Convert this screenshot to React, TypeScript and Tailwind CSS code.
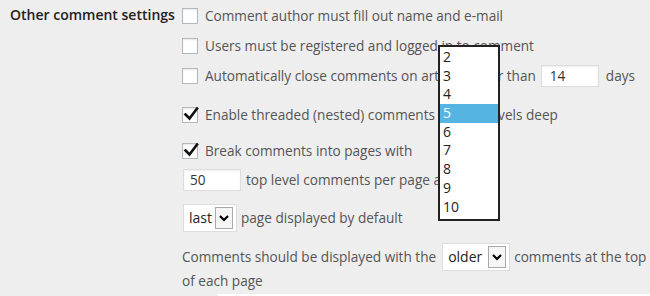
import React from "react";

const Checkbox = ({ checked = false }: { checked?: boolean }) => (
  <span className="relative inline-block w-[16px] h-[16px] shrink-0 bg-white border border-[#b4b9be] shadow-[inset_0_1px_2px_rgba(0,0,0,0.1)] mr-[7px]">
    {checked && (
      <svg className="absolute left-[0px] top-[-2px]" width="17" height="17" viewBox="0 0 17 17">
        <path d="M2.5 8.5 L6.5 12.5 L14 2.5" fill="none" stroke="#111" strokeWidth="2.6" strokeLinecap="square" />
      </svg>
    )}
  </span>
);

const TextInput = ({ value, cls }: { value: string; cls: string }) => (
  <span className={`inline-flex items-center h-[22px] w-[58px] shrink-0 bg-white border border-[#dddddd] shadow-[inset_0_1px_2px_rgba(0,0,0,0.07)] text-[#333] ${cls}`}>
    {value}
  </span>
);

const Select = ({ value, width, textPl }: { value: string; width: string; textPl: string }) => (
  <span className={`inline-flex items-center justify-between shrink-0 h-[28px] bg-white border border-[#dddddd] text-[#222] text-[14px] pr-[3px] ${width}`}>
    <span className={textPl}>{value}</span>
    <span className="flex items-center justify-center w-[18px] h-[22px] border border-[#a9a9a9] bg-[#f6f6f6]">
      <svg width="12" height="10" viewBox="0 0 12 10">
        <path d="M2 3 L6 7 L10 3" fill="none" stroke="#000" strokeWidth="2.2" />
      </svg>
    </span>
  </span>
);

export default function App() {
  const items = ["2", "3", "4", "5", "6", "7", "8", "9", "10"];
  return (
    <div
      className="relative w-[650px] h-[296px] overflow-hidden bg-[#eeeeee] text-[#555] text-[13.6px]"
      style={{ fontFamily: '"Open Sans", "Noto Sans", sans-serif' }}
    >
      <div className="flex">
        <div className="w-[182px] shrink-0 pl-[10px] pt-[5px] leading-[20px] text-[14px] font-semibold text-[#222]">
          Other comment settings
        </div>
        <div className="flex flex-col leading-[20px] whitespace-nowrap">
          <div className="h-[31px] flex items-center">
            <Checkbox />
            <span>Comment author must fill out name and e-mail</span>
          </div>
          <div className="h-[29px] flex items-center">
            <Checkbox />
            <span>Users must be registered and logged in to comment</span>
          </div>
          <div className="h-[32px] flex items-center">
            <Checkbox />
            <span>Automatically close comments on articles older than</span>
            <TextInput value="14" cls="ml-[5px] mr-[7px] pl-[8px]" />
            <span>days</span>
          </div>
          <div className="h-[45px] flex items-center">
            <Checkbox checked />
            <span>Enable threaded (nested) comments</span>
            <span className="inline-block shrink-0 w-[42px] h-[28px] ml-[6px] mr-[4px] bg-white border border-[#ddd]" />
            <span>levels deep</span>
          </div>
          <div className="h-[27px] flex items-center">
            <Checkbox checked />
            <span>Break comments into pages with</span>
          </div>
          <div className="h-[32px] flex items-center">
            <TextInput value="50" cls="ml-[1px] mr-[5px] pl-[6px]" />
            <span>top level comments per page and the</span>
          </div>
          <div className="h-[44px] flex items-center">
            <Select value="last" width="w-[54px] ml-[1px] mr-[4px]" textPl="pl-[5px]" />
            <span>page displayed by default</span>
          </div>
          <div className="h-[34px] flex items-center">
            <span>Comments should be displayed with the</span>
            <Select value="older" width="w-[68px] ml-[6px] mr-[4px]" textPl="pl-[5px]" />
            <span>comments at the top</span>
          </div>
          <div className="h-[14px] leading-[14px] flex items-center">
            <span>of each page</span>
          </div>
          <div className="h-[6px]" />
          <div className="ml-[36px] w-[500px] h-[2px] bg-white" />
        </div>
      </div>

      <div className="absolute left-[438px] top-[45px] w-[62px] h-[176px] bg-white border-2 border-[#222] pt-[1px] text-[14px] text-[#222]">
        {items.map((it) => (
          <div
            key={it}
            className={`h-[18.7px] leading-[18.7px] pl-[3px] ${it === "5" ? "bg-[#56b4e2] text-white" : ""}`}
          >
            {it}
          </div>
        ))}
      </div>
    </div>
  );
}
